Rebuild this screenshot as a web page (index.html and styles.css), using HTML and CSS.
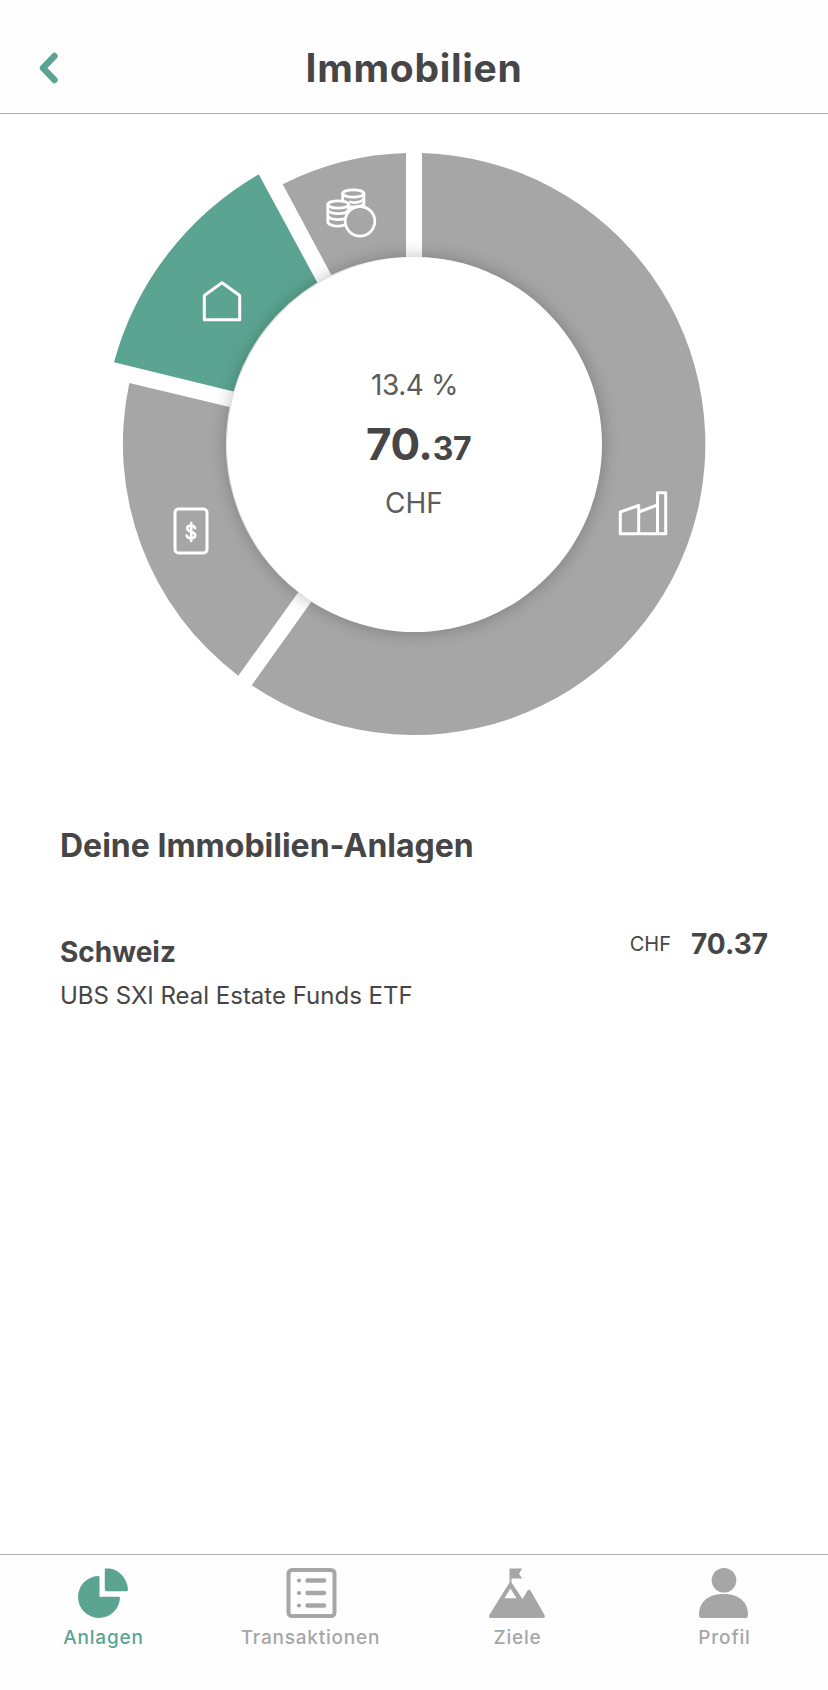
FILE: index.html
```html
<!DOCTYPE html>
<html lang="de">
<head>
    <meta charset="UTF-8">
    <title>Immobilien</title>
    <link rel="stylesheet" href="styles.css">
</head>
<body>
<div class="app">
    <header class="header">
        <a class="back" href="#" aria-label="Zurück">
            <svg width="20" height="32" viewBox="0 0 20 32">
                <path d="M15.500 4 4 16 15.500 28" fill="none" stroke="#5ba491" stroke-width="6.400" stroke-linecap="round" stroke-linejoin="round"/>
            </svg>
        </a>
        <h1 class="title">Immobilien</h1>
    </header>

    <main class="content">
        <div class="chart">
            <svg class="ring" width="828" height="640" viewBox="0 114 828 640">
                <!-- segments -->
                <g fill="#a6a6a6">
                    <path d="M422 153.1A291 291 0 1 1 251.7 685.3L311.3 601.7A187 187 0 1 0 422 257Z"/>
                    <path d="M238.3 675.7A291 291 0 0 1 129.3 383L229.7 407A187 187 0 0 0 298.3 592.3Z"/>
                    <path d="M282.7 184.3A291 291 0 0 1 406 153.1V257A187 187 0 0 0 331.3 275Z"/>
                </g>
                <path fill="#5ba491" d="M114 362.3A311 311 0 0 1 258.7 174.3L317.3 282.5A187 187 0 0 0 233.5 391.5Z"/>
                <!-- icons -->
                <g fill="none" stroke="#fff" stroke-width="3" stroke-linejoin="round" stroke-linecap="round">
                    <path d="M204.3 295.5 222 282.7 239.7 295.5V319.7H204.3Z"/>
                    <path d="M620.3 533.7V512L638.7 505.5V533.7ZM638.7 512 657.5 505M638.7 533.7H657.5M657.5 533.7V492.7H665.7V533.7Z"/>
                    <rect x="175" y="509" width="32" height="44" rx="3.5"/>
                    <g stroke-width="2.800">
                        <ellipse cx="353.300" cy="193.500" rx="10.600" ry="3.700"/>
                        <path d="M342.700 193.500V200M363.900 193.500V207M363.900 198.500C362 202.500 355 203.200 350.500 202M363.500 204.200C361 206.500 355 207.500 350.500 206.600"/>
                        <ellipse cx="338.200" cy="204.500" rx="10.400" ry="3.700"/>
                        <path d="M327.800 204.500V222C329 226 338 227 344 225.200M348.600 204.500V211M327.800 210C330 214.800 346 214.800 348.600 210M327.800 215.800C330 220 340 220.500 345 218.500"/>
                        <circle cx="360" cy="221.300" r="14.800"/>
                    </g>
                    <path stroke-width="2.600" d="M195 528.200C194 524.600 187.200 524.600 187.200 528.500C187.200 532.300 195.200 531.300 195.200 535.300C195.200 539.200 187.800 539.200 186.700 535.600M191.200 523V541"/>
                </g>
            </svg>
            <div class="hole">
                <span class="percent">13.4 %</span>
                <span class="amount">70.<small>37</small></span>
                <span class="currency">CHF</span>
            </div>
        </div>

        <section class="assets">
            <h2 class="assets-title">Deine Immobilien-Anlagen</h2>
            <div class="asset">
                <div class="asset-info">
                    <h3 class="asset-name">Schweiz</h3>
                    <p class="asset-fund">UBS SXI Real Estate Funds ETF</p>
                </div>
                <div class="asset-value">
                    <span class="asset-currency">CHF</span>
                    <strong class="asset-amount">70.37</strong>
                </div>
            </div>
        </section>
    </main>

    <nav class="tabs">
        <a class="tab active" href="#">
            <svg width="60" height="50" viewBox="0.500 0 60 50" fill="currentColor">
                <path d="M24.500 8C25.500 8 26 8.500 26 9.500V28.800H45C46 28.800 46.500 29.300 46.500 30A21 21 0 1 1 24.500 8Z"/>
                <path d="M32 0A22.500 22.500 0 0 1 54.500 21.500Q54.500 23.300 52.800 23.300H33.300Q31.300 23.300 31.300 21.300V1.700Q31.300 .3 32.500 .1Z"/>
            </svg>
            <span>Anlagen</span>
        </a>
        <a class="tab" href="#">
            <svg width="60" height="50" viewBox="0 0 60 50" fill="none" stroke="currentColor" stroke-linecap="round">
                <rect x="7.500" y="2" width="46" height="46" rx="3.500" stroke-width="4"/>
                <path d="M26.500 12.500H43M26.500 25H43M26.500 37.500H43" stroke-width="4.400"/>
                <path d="M18 12.500h.01M18 25h.01M18 37.500h.01" stroke-width="4.200"/>
            </svg>
            <span>Transaktionen</span>
        </a>
        <a class="tab" href="#">
            <svg width="60" height="50" viewBox="1 0 60 50" fill="currentColor">
                <path d="M22.500 0.500H35.200L32 5.700 35.200 10.500H24.500V14.500L35.500 31 40.200 23Q42 20.500 43.800 23L57.500 47Q58.500 50 56 50H4Q1 50 2.200 47.200L22.500 14.500ZM23.500 20.500 17.500 30.200H29.500Z" fill-rule="evenodd"/>
            </svg>
            <span>Ziele</span>
        </a>
        <a class="tab" href="#">
            <svg width="60" height="50" viewBox="1 0 60 50" fill="currentColor">
                <circle cx="30" cy="12.300" r="12.300"/>
                <path d="M5 47C5 33 15 26 29.500 26S54 33 54 47Q54 50 51.500 50H7.500Q5 50 5 47Z"/>
            </svg>
            <span>Profil</span>
        </a>
    </nav>
</div>
</body>
</html>
```
FILE: styles.css
```css
* {
    box-sizing: border-box;
    margin: 0;
    padding: 0;
}

body {
    background: #fff;
    font-family: 'Inter', 'Liberation Sans', sans-serif;
    color: #464646;
}

a {
    text-decoration: none;
    color: inherit;
}

.app {
    display: flex;
    flex-direction: column;
    width: 828px;
    height: 1690px;
}

.header {
    display: grid;
    grid-template-columns: 80px 1fr 80px;
    align-items: center;
    height: 114px;
    padding-top: 22px;
    border-bottom: 1px solid #b0b0b0;
    background: #fefefe;
}

.back {
    display: flex;
    padding-left: 39px;
}

.title {
    font-size: 39px;
    font-weight: 700;
    line-height: 48px;
    letter-spacing: 0.7px;
    text-align: center;
}

.content {
    flex: 1;
}

/* ring and centre share one grid cell */
.chart {
    display: grid;
    height: 640px;
}

.ring,
.hole {
    grid-area: 1 / 1;
}

.hole {
    display: flex;
    flex-direction: column;
    align-items: center;
    width: 375px;
    height: 375px;
    margin: 142.5px auto 0;
    padding-top: 110px;
    border-radius: 50%;
    background: #fff;
    box-shadow: 0 0 18px rgba(0, 0, 0, 0.26);
}

.percent,
.currency {
    font-size: 28px;
    line-height: 36px;
    color: #5c5c5c;
}

.percent {
    padding-left: 1px;
    letter-spacing: -0.4px;
}

.amount {
    margin: 14px 0 9px;
    padding-left: 9px;
    font-size: 44px;
    font-weight: 700;
    line-height: 54px;
    letter-spacing: -0.4px;
}

.amount small {
    font-size: 32px;
}

.assets {
    padding: 71px 60px 0;
}

.assets-title {
    height: 38px;
    font-size: 32px;
    line-height: 42px;
    overflow: hidden;
}

.asset {
    display: flex;
    justify-content: space-between;
    margin-top: 63px;
}

.asset-info {
    padding-top: 8px;
}

.asset-name {
    font-size: 28px;
    line-height: 36px;
}

.asset-fund {
    margin-top: 9px;
    font-size: 24px;
    line-height: 34px;
}

.asset-value {
    display: flex;
    align-items: center;
    gap: 20px;
    height: 36px;
}

.asset-currency {
    font-size: 20px;
}

.asset-amount {
    font-size: 28px;
}

.tabs {
    display: grid;
    grid-template-columns: repeat(4, 1fr);
    height: 136px;
    padding-top: 13px;
    border-top: 1px solid #b0b0b0;
    background: #fefefe;
}

.tab {
    display: flex;
    flex-direction: column;
    align-items: center;
    gap: 8px;
    color: #a6a6a6;
    font-size: 19px;
    font-weight: 500;
    line-height: 24px;
    letter-spacing: 0.8px;
}

.tab.active {
    color: #5ba491;
}
```
